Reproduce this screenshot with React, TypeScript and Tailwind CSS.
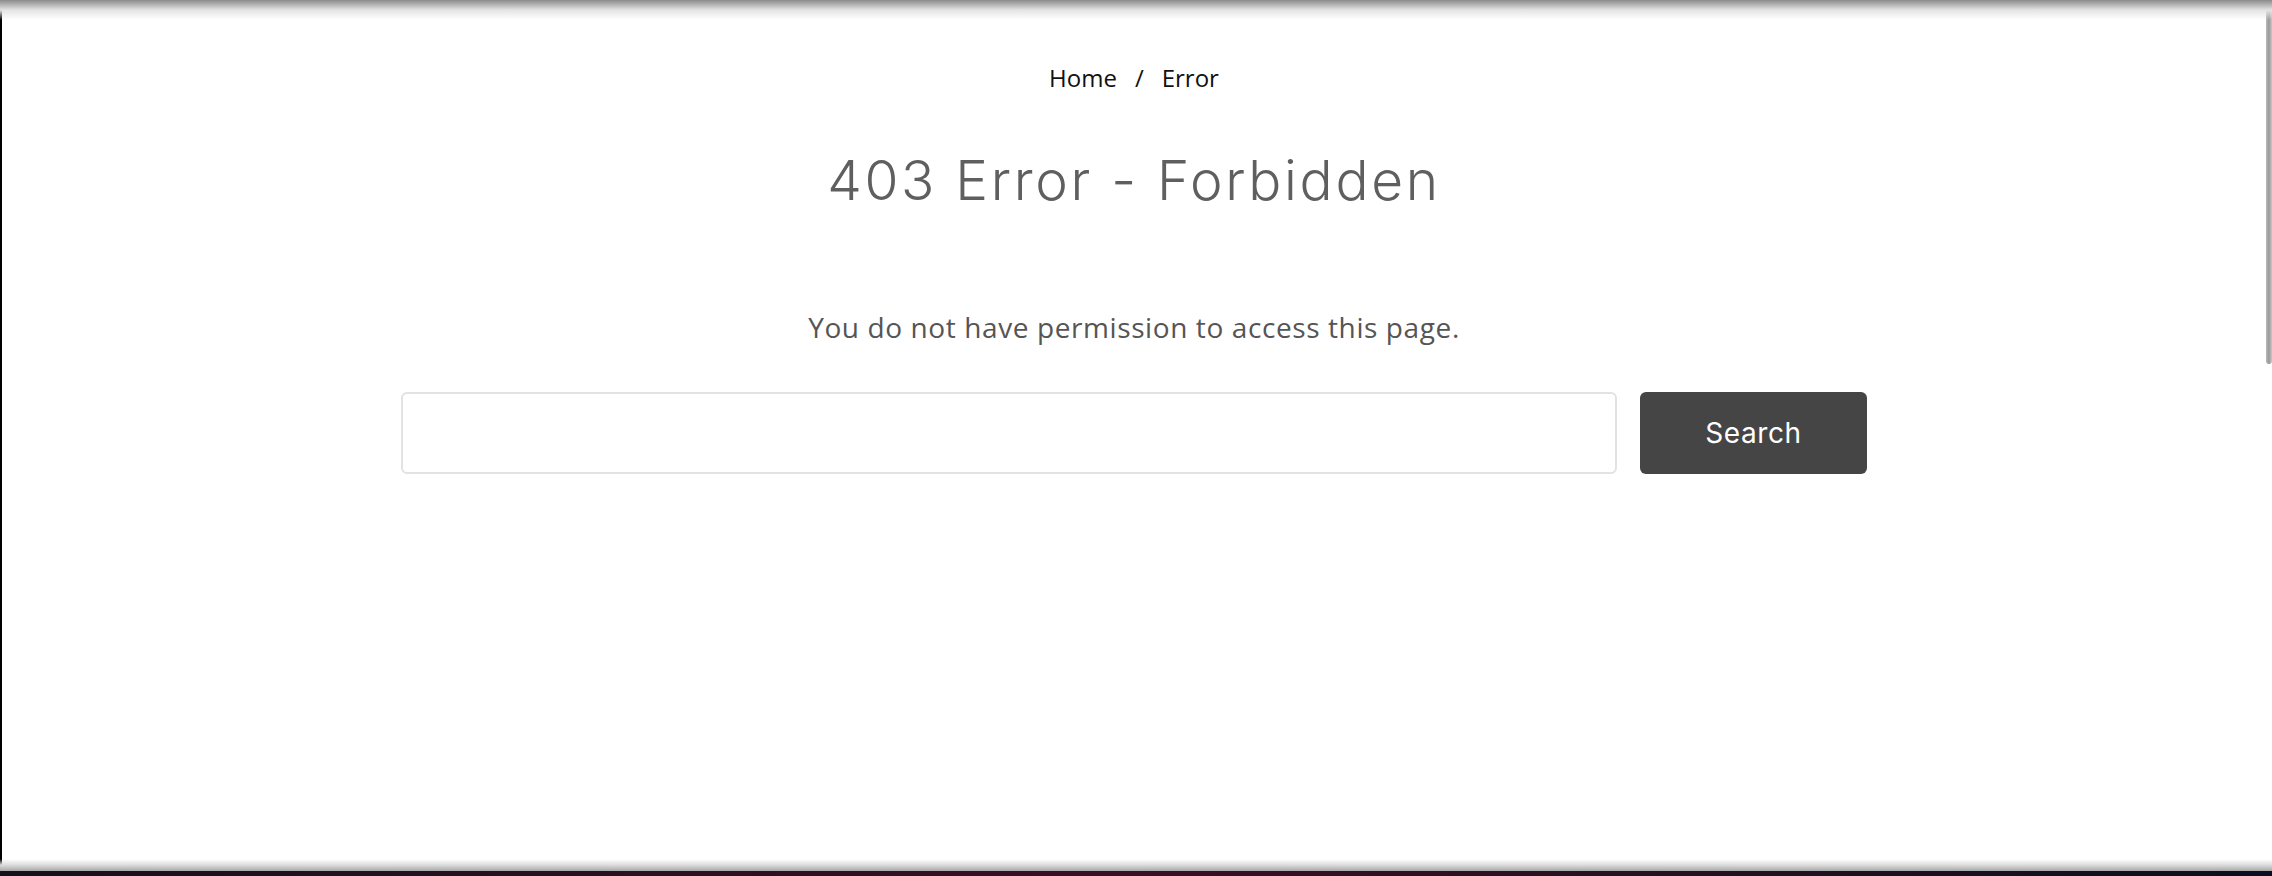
import { useState } from 'react';

function ErrorPage() {
  const [query, setQuery] = useState('');

  return (
    <div className="flex-1 flex flex-col items-center bg-white">
      {/* Breadcrumb */}
      <nav className="mt-[66px] flex items-center gap-[18px] text-[24px] leading-none text-[#111] font-['Open_Sans',sans-serif]">
        <span>Home</span>
        <span>/</span>
        <span>Error</span>
      </nav>

      <h1 className="mt-[63px] text-[55px] leading-none font-light tracking-[2.7px] text-[#5f5f5f] font-['Inter',sans-serif]">
        403 Error - Forbidden
      </h1>

      <p className="mt-[105px] text-[28px] leading-none tracking-[0.6px] text-[#555] font-['Open_Sans',sans-serif]">
        You do not have permission to access this page.
      </p>

      <form
        className="mt-[51px] w-[1466px] flex gap-[23px]"
        onSubmit={e => e.preventDefault()}
      >
        <input
          value={query}
          onChange={e => setQuery(e.target.value)}
          className="flex-1 h-[82px] rounded-[6px] border-2 border-[#e2e2e2] bg-white px-5 text-[24px] outline-none"
        />
        <button
          type="submit"
          className="w-[227px] h-[82px] rounded-[6px] bg-[#454545] text-white text-[28px] tracking-[0.6px] font-['Inter',sans-serif]"
        >
          Search
        </button>
      </form>
    </div>
  );
}

export default function App() {
  return (
    <div className="relative h-[876px] w-full overflow-hidden bg-white">
      <div className="flex h-[871px]">
        <div className="w-[2px] bg-black" />
        <ErrorPage />
        {/* Scrollbar */}
        <div className="w-[6px] bg-white">
          <div className="h-[364px] rounded-b-[4px] bg-gradient-to-r from-[#b8b8b8] via-[#9a9a9a] to-[#c8c8c8]" />
        </div>
      </div>
      <div className="h-[5px] bg-gradient-to-r from-[#14101c] via-[#3a1022] to-[#0a0e1e]" />

      {/* Window shadows */}
      <div className="pointer-events-none absolute left-0 right-0 top-0 h-[20px] bg-gradient-to-b from-[#8c8c8c] via-[#e4e4e4] to-transparent" />
      <div className="pointer-events-none absolute left-0 right-0 bottom-[5px] h-[12px] bg-gradient-to-t from-[#a8a8a8] via-[#dcdcdc] to-transparent" />
    </div>
  );
}
